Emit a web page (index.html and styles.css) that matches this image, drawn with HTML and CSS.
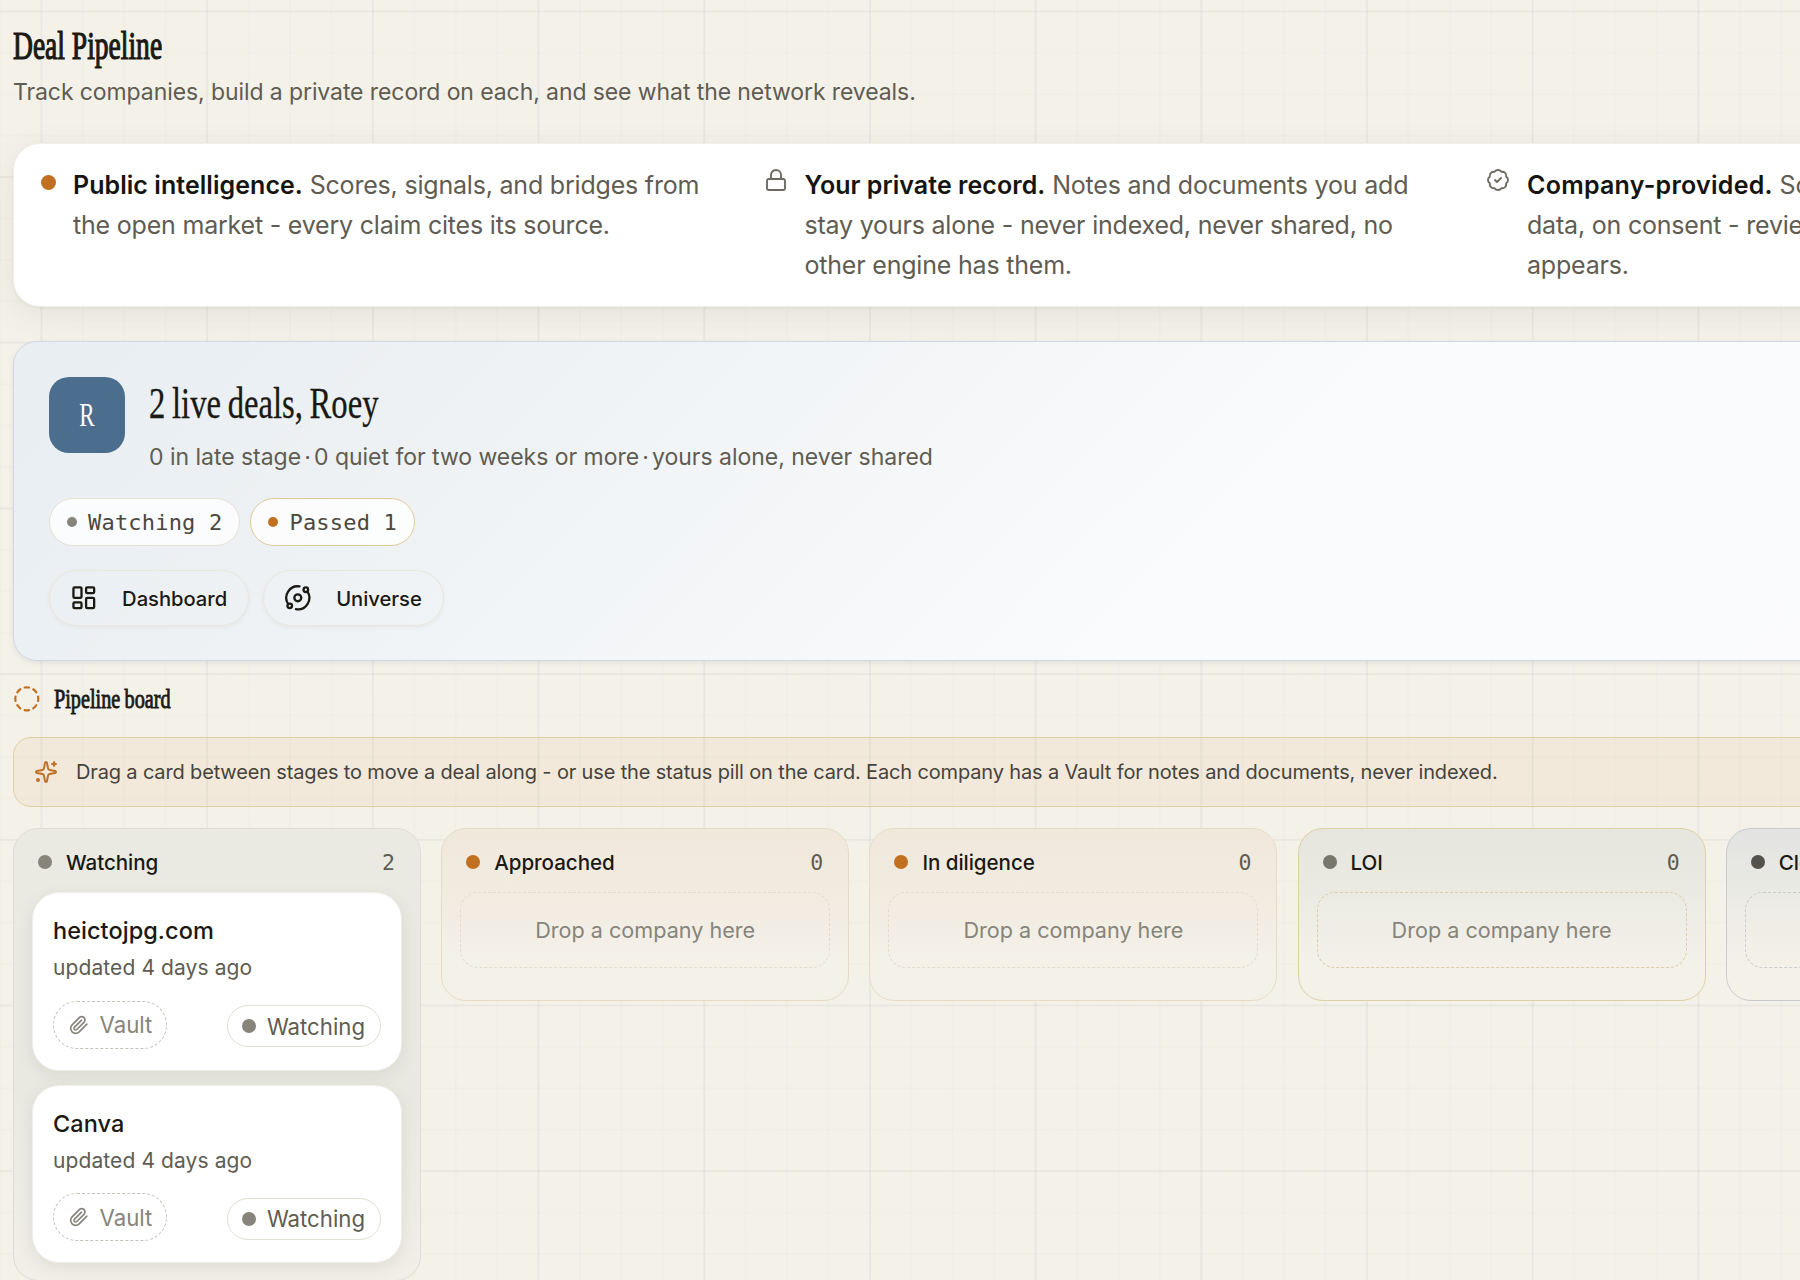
FILE: index.html
```
<!DOCTYPE html>
<html lang="en">
<head>
    <meta charset="UTF-8">
    <meta name="viewport" content="width=device-width, initial-scale=1.0">
    <title>Deal Pipeline</title>
    <link rel="stylesheet" href="styles.css">
</head>
<body>
    <main class="page">
        <header class="page-header">
            <h1 class="serif">Deal Pipeline</h1>
            <p>Track companies, build a private record on each, and see what the network reveals.</p>
        </header>

        <section class="legend">
            <div class="legend-item">
                <span class="dot dot-amber legend-dot"></span>
                <p><strong>Public intelligence.</strong> Scores, signals, and bridges from<br>the open market - every claim cites its source.</p>
            </div>
            <div class="legend-item">
                <svg class="icon legend-icon" viewBox="0 0 24 24"><rect x="3" y="11" width="18" height="11" rx="2"/><path d="M7 11V7a5 5 0 0 1 10 0v4"/></svg>
                <p><strong>Your private record.</strong> Notes and documents you add<br>stay yours alone - never indexed, never shared, no<br>other engine has them.</p>
            </div>
            <div class="legend-item">
                <svg class="icon legend-icon" viewBox="0 0 24 24"><path d="M3.85 8.62a4 4 0 0 1 4.78-4.77 4 4 0 0 1 6.74 0 4 4 0 0 1 4.78 4.78 4 4 0 0 1 0 6.74 4 4 0 0 1-4.77 4.78 4 4 0 0 1-6.75 0 4 4 0 0 1-4.78-4.77 4 4 0 0 1 0-6.76Z"/><path d="m9 12 2 2 4-4"/></svg>
                <p><strong>Company-provided.</strong> Scoped<br>data, on consent - reviewed<br>appears.</p>
            </div>
        </section>

        <section class="hero">
            <div class="hero-top">
                <div class="avatar"><span class="serif">R</span></div>
                <div class="hero-copy">
                    <h2 class="serif">2 live deals, Roey</h2>
                    <p><span>0 in late stage</span><i>·</i><span>0 quiet for two weeks or more</span><i>·</i><span>yours alone, never shared</span></p>
                </div>
            </div>
            <div class="pills">
                <span class="pill"><span class="dot dot-gray"></span>Watching 2</span>
                <span class="pill pill-passed"><span class="dot dot-amber"></span>Passed 1</span>
            </div>
            <div class="actions">
                <a class="btn" href="#">
                    <svg class="icon" viewBox="0 0 24 24"><rect x="3" y="3" width="7" height="9" rx="1"/><rect x="14" y="3" width="7" height="5" rx="1"/><rect x="14" y="12" width="7" height="9" rx="1"/><rect x="3" y="16" width="7" height="5" rx="1"/></svg>
                    Dashboard
                </a>
                <a class="btn" href="#">
                    <svg class="icon" viewBox="0 0 24 24"><circle cx="12" cy="12" r="3"/><circle cx="19" cy="5" r="2"/><circle cx="5" cy="19" r="2"/><path d="M10.4 21.9a10 10 0 0 0 9.941-15.416"/><path d="M13.5 2.1a10 10 0 0 0-9.841 15.416"/></svg>
                    Universe
                </a>
            </div>
        </section>

        <div class="board-title">
            <svg class="icon" viewBox="0 0 24 24"><path d="M10.1 2.182a10 10 0 0 1 3.8 0"/><path d="M13.9 21.818a10 10 0 0 1-3.8 0"/><path d="M17.609 3.721a10 10 0 0 1 2.69 2.7"/><path d="M2.182 13.9a10 10 0 0 1 0-3.8"/><path d="M20.279 17.609a10 10 0 0 1-2.7 2.69"/><path d="M21.818 10.1a10 10 0 0 1 0 3.8"/><path d="M3.721 6.391a10 10 0 0 1 2.7-2.69"/><path d="M6.391 20.279a10 10 0 0 1-2.69-2.7"/></svg>
            <h3 class="serif">Pipeline board</h3>
        </div>

        <div class="hint">
            <svg class="icon" viewBox="0 0 24 24"><path d="M11.017 2.814a1 1 0 0 1 1.966 0l1.051 5.558a2 2 0 0 0 1.594 1.594l5.558 1.051a1 1 0 0 1 0 1.966l-5.558 1.051a2 2 0 0 0-1.594 1.594l-1.051 5.558a1 1 0 0 1-1.966 0l-1.051-5.558a2 2 0 0 0-1.594-1.594l-5.558-1.051a1 1 0 0 1 0-1.966l5.558-1.051a2 2 0 0 0 1.594-1.594z"/><path d="M20 2v4"/><path d="M22 4h-4"/><circle cx="4" cy="20" r="1"/></svg>
            <p>Drag a card between stages to move a deal along - or use the status pill on the card. Each company has a Vault for notes and documents, never indexed.</p>
        </div>

        <section class="board">
            <div class="column column-watching">
                <div class="column-head"><span class="dot dot-gray"></span>Watching<b>2</b></div>
                <div class="column-list">
                    <article class="card">
                        <h4>heictojpg.com</h4>
                        <p>updated 4 days ago</p>
                        <div class="card-foot">
                            <span class="vault"><svg class="icon" viewBox="0 0 24 24"><path d="m21.44 11.05-9.19 9.19a6 6 0 0 1-8.49-8.49l8.57-8.57A4 4 0 1 1 18 8.84l-8.59 8.57a2 2 0 0 1-2.83-2.83l8.49-8.48"/></svg>Vault</span>
                            <span class="status"><span class="dot dot-gray"></span>Watching</span>
                        </div>
                    </article>
                    <article class="card">
                        <h4>Canva</h4>
                        <p>updated 4 days ago</p>
                        <div class="card-foot">
                            <span class="vault"><svg class="icon" viewBox="0 0 24 24"><path d="m21.44 11.05-9.19 9.19a6 6 0 0 1-8.49-8.49l8.57-8.57A4 4 0 1 1 18 8.84l-8.59 8.57a2 2 0 0 1-2.83-2.83l8.49-8.48"/></svg>Vault</span>
                            <span class="status"><span class="dot dot-gray"></span>Watching</span>
                        </div>
                    </article>
                </div>
            </div>
            <div class="column column-amber">
                <div class="column-head"><span class="dot dot-amber"></span>Approached<b>0</b></div>
                <div class="column-list"><div class="drop">Drop a company here</div></div>
            </div>
            <div class="column column-amber">
                <div class="column-head"><span class="dot dot-amber"></span>In diligence<b>0</b></div>
                <div class="column-list"><div class="drop">Drop a company here</div></div>
            </div>
            <div class="column column-loi">
                <div class="column-head"><span class="dot dot-olive"></span>LOI<b>0</b></div>
                <div class="column-list"><div class="drop">Drop a company here</div></div>
            </div>
            <div class="column column-closed">
                <div class="column-head"><span class="dot dot-dark"></span>Closed<b>0</b></div>
                <div class="column-list"><div class="drop">Drop a company here</div></div>
            </div>
        </section>
    </main>
</body>
</html>
```
FILE: styles.css
```
* {
    box-sizing: border-box;
}
html, body {
    height: 1280px;
    overflow: hidden;
}
body {
    margin: 0;
    font-family: Inter, sans-serif;
    color: #1a1913;
    background-color: #f4f1e9;
    /* major grid every 166px, minor grid every 41px */
    background-image:
        linear-gradient(to right, rgba(90, 110, 100, 0.05) 2px, transparent 2px),
        linear-gradient(to bottom, rgba(90, 110, 100, 0.05) 2px, transparent 2px),
        linear-gradient(to right, rgba(90, 110, 100, 0.018) 2px, transparent 2px),
        linear-gradient(to bottom, rgba(90, 110, 100, 0.018) 2px, transparent 2px);
    background-size: 165.7px 165.7px, 165.7px 165.7px, 41.425px 41.425px, 41.425px 41.425px;
    background-position: 40.5px 10.4px;
}
h1, h2, h3, h4, p {
    margin: 0;
    font-weight: 400;
    white-space: nowrap;
}
.page {
    width: 2210px;
    padding: 25px 13px 0;
}
/* condensed display face */
.serif {
    font-family: "Liberation Serif", serif;
    transform-origin: left center;
    transform: scaleX(0.742);
    word-spacing: -2px;
}
.icon {
    flex: none;
    fill: none;
    stroke: currentColor;
    stroke-width: 2;
    stroke-linecap: round;
    stroke-linejoin: round;
}
.dot {
    flex: none;
    width: 14px;
    height: 14px;
    border-radius: 50%;
}
.dot-amber { background: #c07020; }
.dot-gray { background: #86847b; }
.dot-olive { background: #77776d; }
.dot-dark { background: #54524a; }

.page-header h1 {
    font-size: 39px;
    line-height: 41px;
    transform: scaleX(0.706);
    word-spacing: 0;
    -webkit-text-stroke: 1.2px #1a1913;
}
.page-header p {
    margin-top: 8px;
    font-size: 23px;
    line-height: 36px;
    letter-spacing: -0.09px;
    color: #5f5c52;
}

.legend {
    display: grid;
    grid-template-columns: repeat(3, 690px);
    gap: 32.5px;
    margin-top: 33px;
    height: 164px;
    padding: 21px 27px;
    background: #fff;
    border: 1px solid #f1efe8;
    border-radius: 27px;
    box-shadow: 0 8px 32px rgba(80, 85, 60, 0.09), 0 1px 3px rgba(80, 85, 60, 0.06);
}
.legend-item {
    display: flex;
    gap: 17px;
}
.legend-item p {
    font-size: 25px;
    line-height: 40.2px;
    letter-spacing: -0.2px;
    color: #5f5c52;
}
.legend-item strong {
    font-weight: 600;
    letter-spacing: 0.05px;
    color: #15140f;
}
.legend-item:last-child strong {
    letter-spacing: 0.25px;
}
.legend-dot {
    width: 15px;
    height: 15px;
    margin-top: 10px;
}
.legend-icon {
    width: 24px;
    height: 24px;
    margin-top: 3px;
    stroke-width: 1.9;
    color: #6d6b61;
}

.hero {
    margin-top: 34px;
    height: 320px;
    padding: 35px 35px;
    border: 1px solid #cfd8e3;
    border-radius: 24px;
    background: linear-gradient(135deg, #e9eef2 0%, #edf1f4 18%, #f4f6f8 38%, #fafbfd 58%, #fcfcfe 100%);
    box-shadow: 0 2px 5px rgba(70, 90, 110, 0.1);
}
.hero-top {
    display: flex;
    gap: 24px;
    height: 121px;
}
.avatar {
    display: flex;
    align-items: center;
    justify-content: center;
    width: 76px;
    height: 76px;
    border-radius: 20px;
    background: #4c6e8e;
    color: #fff;
    font-size: 33px;
}
.avatar .serif {
    transform-origin: center;
    transform: scaleX(0.7);
}
.hero-copy {
    padding-top: 2px;
}
.hero-copy h2 {
    font-size: 44px;
    line-height: 50px;
    -webkit-text-stroke: 0.3px #1a1913;
}
.hero-copy p {
    display: flex;
    margin-top: 11px;
    font-size: 23px;
    line-height: 34px;
    letter-spacing: -0.03px;
    color: #5f5c52;
}
.hero-copy i {
    width: 13px;
    text-align: center;
    font-style: normal;
}
.pills {
    display: flex;
    gap: 10px;
}
.pill {
    display: flex;
    align-items: center;
    gap: 11px;
    height: 48px;
    padding: 0 17px;
    border: 1px solid #e4e1d5;
    border-radius: 24px;
    background: rgba(255, 255, 255, 0.8);
    font-family: "DejaVu Sans Mono", monospace;
    font-size: 22px;
    letter-spacing: 0.2px;
    color: #4a483f;
}
.pill .dot {
    width: 10px;
    height: 10px;
}
.pill-passed {
    border-color: #dfcb99;
}
.actions {
    display: flex;
    gap: 14px;
    margin-top: 24px;
}
.btn {
    display: flex;
    align-items: center;
    gap: 24.5px;
    height: 56px;
    padding: 0 21px 0 20px;
    border: 1px solid #e9e6db;
    border-radius: 28px;
    box-shadow: 0 2px 4px rgba(80, 80, 60, 0.06);
    font-size: 20.2px;
    font-weight: 500;
    letter-spacing: -0.03px;
    color: #1a1913;
    text-decoration: none;
}
.btn .icon {
    width: 27.6px;
    height: 27.6px;
}

.board-title {
    display: flex;
    align-items: center;
    gap: 13px;
    height: 36px;
    margin-top: 20px;
}
.board-title .icon {
    width: 27.6px;
    height: 27.6px;
    color: #c07020;
    stroke-width: 1.9;
}
.board-title h3 {
    font-size: 27.5px;
    line-height: 34px;
    transform: scaleX(0.735);
    word-spacing: -1px;
    -webkit-text-stroke: 0.9px #1a1913;
}
.hint {
    display: flex;
    align-items: center;
    gap: 18px;
    height: 70px;
    margin-top: 20px;
    padding: 0 20px;
    border: 1px solid #e0cfa4;
    border-radius: 18px;
    background: rgba(215, 145, 80, 0.085);
    font-size: 20px;
    letter-spacing: -0.15px;
    color: #45433b;
}
.hint .icon {
    width: 24px;
    height: 24px;
    color: #c07020;
}

.board {
    display: flex;
    align-items: flex-start;
    gap: 20.2px;
    margin-top: 21px;
}
.column {
    flex: none;
    width: 408px;
    padding: 3px 18px 17px;
    border: 1px solid #dfddd2;
    border-radius: 25px;
}
.column-watching {
    background: linear-gradient(#eaeae3, #e9e9e2 60%, #f1efe7);
}
.column-amber {
    border-color: #e6dcc6;
    background: linear-gradient(#f1e8dc, #f1ebe0 40%, #f4f1e9 75%);
}
.column-loi {
    border-color: #dfcfa4;
    background: linear-gradient(#e6e6df, #eaeae3 35%, #f4f1e9 80%);
}
.column-closed {
    border-color: #c9ccce;
    background: linear-gradient(#e2e3e2, #eaeae4 35%, #f4f1e9 80%);
}
.column-head {
    display: flex;
    align-items: center;
    gap: 14px;
    height: 60px;
    padding: 0 7px 0 6px;
    font-size: 20.6px;
    font-weight: 500;
    letter-spacing: -0.05px;
}
.column-head b {
    margin-left: auto;
    font-family: "DejaVu Sans Mono", monospace;
    font-size: 21.5px;
    font-weight: 400;
    color: #5f5c52;
}
.column-list {
    display: flex;
    flex-direction: column;
    gap: 14px;
    min-height: 91px;
}
.card {
    height: 178.5px;
    padding: 23px 20px;
    background: #fff;
    border: 1px solid #f0eee8;
    border-radius: 27px;
    box-shadow: 0 5px 16px rgba(80, 85, 60, 0.1);
}
.card h4 {
    font-size: 23.5px;
    font-weight: 500;
    line-height: 30px;
    letter-spacing: 0.05px;
}
.card p {
    margin-top: 8px;
    font-size: 21px;
    line-height: 28px;
    letter-spacing: 0.1px;
    color: #5f5c52;
}
.card-foot {
    display: flex;
    align-items: center;
    justify-content: space-between;
    margin-top: 18.5px;
}
.vault, .status {
    display: flex;
    align-items: center;
    font-size: 22.2px;
}
.vault {
    gap: 10.5px;
    height: 48px;
    padding: 0 14px 0 15px;
    border: 1px dashed #c2c0b7;
    border-radius: 24px;
    color: #86847b;
}
.vault .icon {
    width: 20px;
    height: 20px;
}
.status {
    gap: 11px;
    height: 42px;
    padding: 0 15px 0 14px;
    margin-top: 3px;
    border: 1px solid #e2dfd3;
    border-radius: 21px;
    color: #5f5c52;
}
.drop {
    display: flex;
    align-items: center;
    justify-content: center;
    height: 76px;
    border: 1px dashed #dcdace;
    border-radius: 18px;
    font-size: 21.6px;
    color: #86847b;
}
.column-amber .drop {
    border-color: #e3dccb;
}
.column-loi .drop {
    border-color: #dacda8;
}
.column-closed .drop {
    border-color: #c9ccce;
}
```
